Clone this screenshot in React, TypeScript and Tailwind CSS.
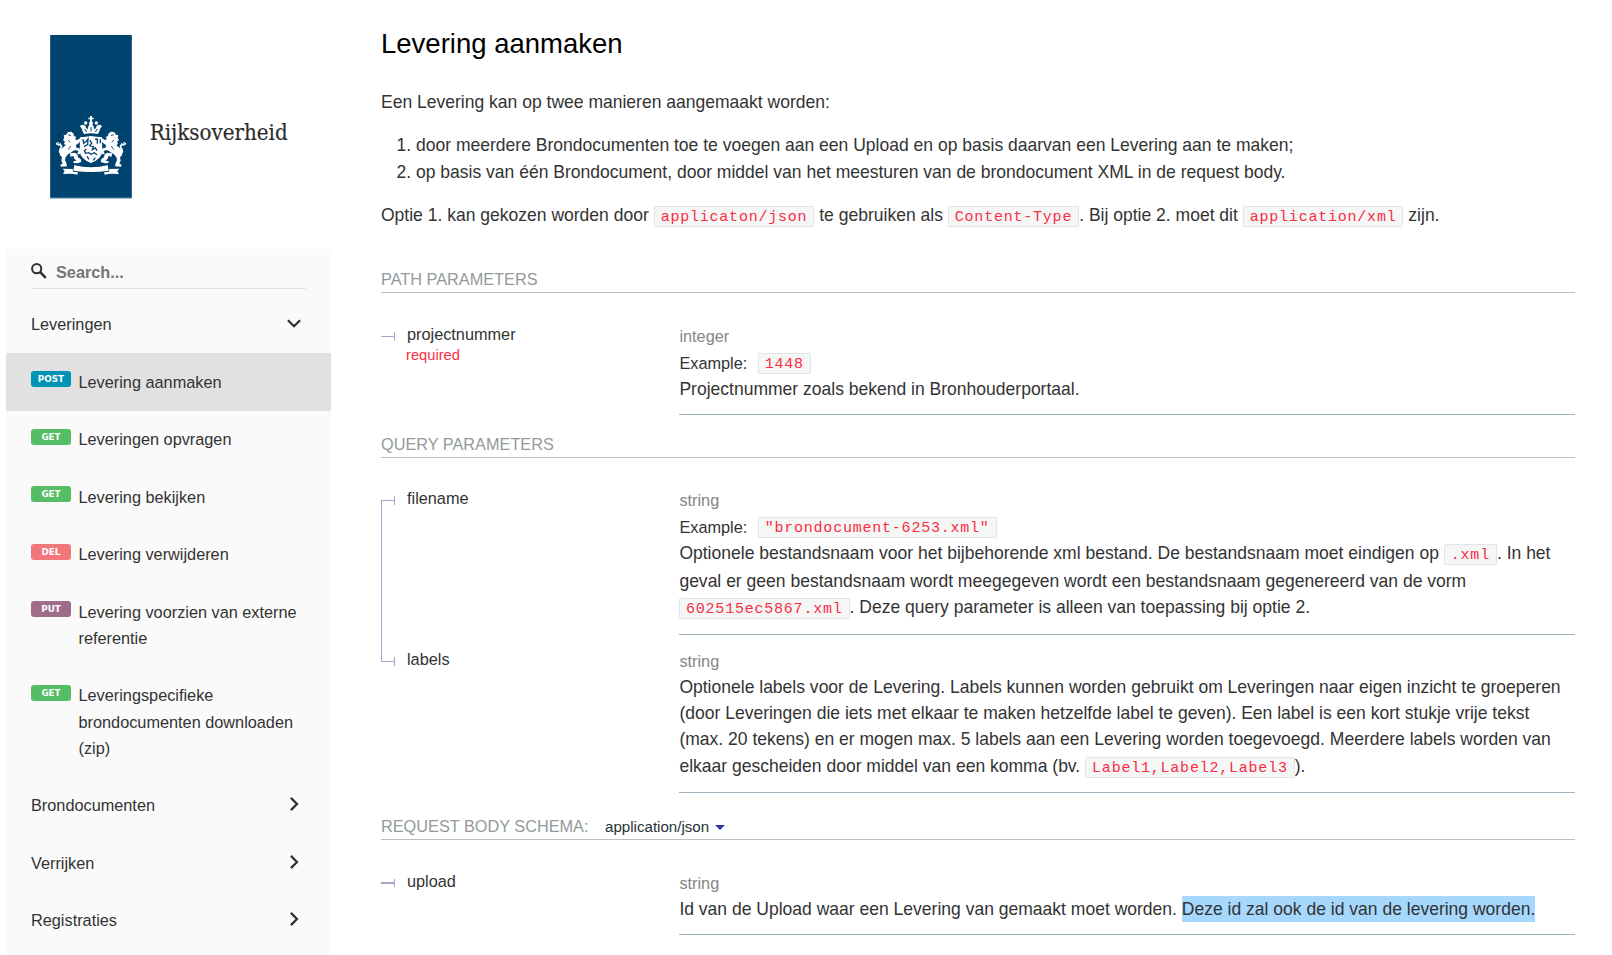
import type { ReactNode } from 'react';

const Code = ({ children }: { children: ReactNode }) => (
  <code
    className="rounded-[2px] border border-[#e2e5e6] bg-[#f5f6f6] px-[6px] pt-[2px] text-[15px] tracking-[0.78px] text-[#fb2c42]"
    style={{ fontFamily: '"Liberation Mono", monospace' }}
  >
    {children}
  </code>
);

const Line = ({ children, className = 'h-[26px]' }: { children: ReactNode; className?: string }) => (
  <div className={`whitespace-nowrap text-[17.53px] leading-[26px] ${className}`}>{children}</div>
);

const Heading = ({ children, className }: { children: ReactNode; className: string }) => (
  <h5
    className={`flex h-[27px] items-baseline border-b border-[#bbbfc1] text-[16.3px] leading-[26px] text-[#929a9d] ${className}`}
  >
    {children}
  </h5>
);

type ParamProps = {
  name: string;
  type: string;
  nameTop: string;
  padding: string;
  required?: boolean;
  connector: ReactNode;
  children: ReactNode;
};

const Param = ({ name, type, nameTop, padding, required, connector, children }: ParamProps) => (
  <div className="flex">
    <div className={`relative w-[298px] shrink-0 pl-[26px] ${nameTop}`}>
      {connector}
      <div className="text-[16.3px] leading-[26px]">{name}</div>
      {required && (
        <div className="-ml-px -mt-[3px] text-[14.7px] leading-[22px] text-[#fb2c42]">required</div>
      )}
    </div>
    <div className={`flex-1 border-b border-[#9fb4be] ${padding}`}>
      <div className="pl-[0.4px] text-[16.3px] leading-[26px] text-[#858585]">{type}</div>
      {children}
    </div>
  </div>
);

const Example = ({ value }: { value: string }) => (
  <div className="mt-px flex h-[26px] items-start gap-[10.4px] whitespace-nowrap pl-[0.4px] text-[16.3px] leading-[26px]">
    <span>Example:</span>
    <span className="-mt-px">
      <Code>{value}</Code>
    </span>
  </div>
);

const badgeColors = {
  POST: 'bg-[#0093b5]',
  GET: 'bg-[#55bd63]',
  DEL: 'bg-[#f2777a]',
  PUT: 'bg-[#a06c8c]',
};

const operations: { method: keyof typeof badgeColors; lines: string[]; active?: boolean }[] = [
  { method: 'POST', lines: ['Levering aanmaken'], active: true },
  { method: 'GET', lines: ['Leveringen opvragen'] },
  { method: 'GET', lines: ['Levering bekijken'] },
  { method: 'DEL', lines: ['Levering verwijderen'] },
  { method: 'PUT', lines: ['Levering voorzien van externe', 'referentie'] },
  { method: 'GET', lines: ['Leveringspecifieke', 'brondocumenten downloaden', '(zip)'] },
];

const Chevron = ({ down = false }: { down?: boolean }) => (
  <svg className="mr-[5px]" width="14" height="14" viewBox="0 0 14 14" fill="none" stroke="#2f2f2f" strokeWidth="2.2">
    <path d={down ? 'M0.9 3.2 L7 9.3 L13.1 3.2' : 'M3.9 0.9 L10 7 L3.9 13.1'} />
  </svg>
);

const Group = ({ label }: { label: string }) => (
  <div className="flex h-[57.5px] items-center justify-between px-[25px]">
    <span className="leading-[26px]">{label}</span>
    <div className="-mt-[2px]">
      <Chevron />
    </div>
  </div>
);

const Lion = () => (
  <g>
    <path d="M204 396 L214 395 L221 401 L222 408 L229 411 L225 418 L232 420 L240 415 L243 421 L236 430 L228 435 L229 443 L238 445 L243 455 L239 463 L232 462 L235 453 L226 450 L219 453 L212 458 L204 463 L197 472 L195 480 L199 490 L201 499 L183 500 L181 494 L188 491 L184 482 L186 472 L180 466 L179 455 L184 446 L191 440 L197 436 L192 431 L195 425 L189 420 L193 414 L191 406 L198 404 Z" />
    <path d="M210 460 L224 458 L232 463 L234 472 L242 477 L244 486 L232 490 L221 489 L220 484 L229 482 L222 475 L221 468 L211 470 Z" />
    <path d="M182 460 C172 450 188 444 184 437 C181 432 175 436 168 430" fill="none" stroke="white" strokeWidth="5" />
    <path d="M168 430 L177 428 M175 437 L182 429" stroke="white" strokeWidth="3" />
    <path d="M204 404 L213 407 M204 420 L211 427 M212 438 L205 449" stroke="#03416d" strokeWidth="2.5" />
  </g>
);

const Logo = () => (
  <svg width="290" height="164" viewBox="150 105 870 492" className="ml-[50px] mt-[35px] shrink-0">
    <rect x="150" y="105" width="246" height="491" fill="#7ca3c1" />
    <rect x="151" y="105" width="244" height="488" fill="#00436f" />
    <g fill="white">
      <path d="M270 348 h6 v5 h5 v5 h-5 v7 h-6 v-7 h-5 v-5 h5 Z" />
      <circle cx="273" cy="370" r="6" />
      <path d="M252 402 C247 390 242 384 246 377 C250 372 257 376 257 381 L262 389 C265 384 264 377 268 375 L278 375 C282 378 281 384 284 389 L289 381 C289 376 296 372 300 377 C304 384 299 390 294 402 Q273 397 252 402 Z" />
      <circle cx="257" cy="369" r="5" />
      <circle cx="289" cy="369" r="5" />
      <circle cx="246" cy="379" r="5" />
      <circle cx="300" cy="379" r="5" />
      <path d="M240 412 Q258 411 273 408 Q288 411 306 412 L307 455 Q304 477 273 489 Q242 477 239 455 Z" />
      <Lion />
      <g transform="translate(546 0) scale(-1 1)">
        <Lion />
      </g>
      <path d="M223 495 Q273 509 323 495 L326 512 Q273 520 220 512 Z" />
      <path d="M188 506 L218 507 L219 515 L234 517 L232 524 Q216 519 189 522 L194 514 Z" />
      <path d="M358 506 L328 507 L327 515 L312 517 L314 524 Q330 519 357 522 L352 514 Z" />
    </g>
    <g fill="none" stroke="#00436f">
      <path d="M254 387 L260 396 M273 381 V394 M292 387 L286 396" strokeWidth="3" />
      <path d="M249 417 L251 430 L259 424 L264 417 L263 434 L252 440 M270 420 L275 430 L269 437 L280 440 L277 449 L286 444 L291 452 M285 418 L292 417 L292 431 M301 418 V430 M259 447 L253 452 L257 460 L266 458 L273 463 L283 458 L291 464 M261 469 L267 478 M286 473 L280 481" strokeWidth="4" />
      <path d="M219 493 Q273 505 327 493" strokeWidth="2" />
    </g>
    <text
      x="449"
      y="421"
      fontSize="69"
      textLength="414"
      lengthAdjust="spacingAndGlyphs"
      fill="#2b2b2b"
      stroke="#2b2b2b"
      strokeWidth="0.5"
      style={{ fontFamily: '"DejaVu Serif Condensed", "DejaVu Serif", serif', fontStretch: 'condensed' }}
    >
      Rijksoverheid
    </text>
  </svg>
);

export default function App() {
  return (
    <div
      className="flex h-[955px] w-[1612px] overflow-hidden bg-white text-[#333333]"
      style={{ fontFamily: '"Liberation Sans", Arial, sans-serif' }}
    >
      <aside className="flex w-[331px] shrink-0 flex-col">
        <div className="flex h-[249px] shrink-0">
          <Logo />
        </div>
        <nav className="ml-[6px] flex-1 bg-[#fafafa] text-[16.3px]">
          <div className="mx-[25px] flex h-[40px] border-b border-[#e1e1e1]">
            <svg className="mt-[14px]" width="16" height="16" viewBox="0 0 16 16" fill="none" stroke="#2f2f2f">
              <circle cx="5.7" cy="5.7" r="4.6" strokeWidth="2" />
              <path d="M9.2 9.2 L14.8 14.8" strokeWidth="2.6" />
            </svg>
            <span className="ml-[9px] mt-[10px] text-[16.3px] font-bold leading-[26px] text-[#757575]">Search...</span>
          </div>
          <div className="flex h-[64px] items-start justify-between px-[25px] pt-[22px]">
            <span className="leading-[26px]">Leveringen</span>
            <div className="mt-[6px]">
              <Chevron down />
            </div>
          </div>
          {operations.map((op) => (
            <div
              key={op.lines[0]}
              className={`flex items-start px-[25px] pt-[15.7px] pb-[15.62px] ${op.active ? 'bg-[#e1e1e1]' : ''}`}
            >
              <span
                className={`mt-[2.5px] flex h-[16px] w-[40px] shrink-0 items-center justify-center rounded-[3px] text-[8.8px] font-bold leading-[16px] text-white ${badgeColors[op.method]}`}
                style={{ fontFamily: '"DejaVu Sans", Verdana, sans-serif' }}
              >
                {op.method}
              </span>
              <span className="ml-[7.5px] whitespace-nowrap leading-[26.2px]">
                {op.lines.map((line) => (
                  <span key={line} className="block">
                    {line}
                  </span>
                ))}
              </span>
            </div>
          ))}
          <Group label="Brondocumenten" />
          <Group label="Verrijken" />
          <Group label="Registraties" />
        </nav>
      </aside>

      <main className="ml-[50px] flex w-[1194px] shrink-0 flex-col">
        <h2 className="mt-[26px] h-[36px] whitespace-nowrap text-[27.5px] leading-[36px] text-black">
          Levering aanmaken
        </h2>
        <Line className="mt-[27px] h-[26px]">Een Levering kan op twee manieren aangemaakt worden:</Line>
        <ol className="mt-[17px] pl-[15.4px]">
          <li>
            <Line className="h-[27px]">
              <span className="inline-block w-[19.6px]">1.</span>
              door meerdere Brondocumenten toe te voegen aan een Upload en op basis daarvan een Levering aan te maken;
            </Line>
          </li>
          <li>
            <Line>
              <span className="inline-block w-[19.6px]">2.</span>
              op basis van één Brondocument, door middel van het meesturen van de brondocument XML in de request body.
            </Line>
          </li>
        </ol>
        <Line className="mt-[17px] h-[26px]">
          Optie 1. kan gekozen worden door <Code>applicaton/json</Code> te gebruiken als <Code>Content-Type</Code>. Bij
          optie 2. moet dit <Code>application/xml</Code> zijn.
        </Line>

        <Heading className="mt-[38px]">PATH PARAMETERS</Heading>
        <Param
          name="projectnummer"
          type="integer"
          nameTop="pt-[28px]"
          padding="pt-[30px] pb-[12px]"
          required
          connector={
            <>
              <i className="absolute left-0 top-[43px] h-px w-[14px] bg-[#a3a5cd]" />
              <i className="absolute left-[13px] top-[39px] h-[9px] w-px bg-[#a3a5cd]" />
            </>
          }
        >
          <Example value="1448" />
          <Line className="h-[26px] pl-[0.4px]">Projectnummer zoals bekend in Bronhouderportaal.</Line>
        </Param>

        <Heading className="mt-[16px]">QUERY PARAMETERS</Heading>
        <Param
          name="filename"
          type="string"
          nameTop="pt-[27px]"
          padding="pt-[29px] pb-[14px]"
          connector={
            <>
              <i className="absolute bottom-0 left-0 top-[42px] w-[14px] border-l border-t border-[#a3a5cd]" />
              <i className="absolute left-[13px] top-[38px] h-[9px] w-px bg-[#a3a5cd]" />
            </>
          }
        >
          <Example value={'"brondocument-6253.xml"'} />
          <Line className="h-[28px] pl-[0.4px]">
            Optionele bestandsnaam voor het bijbehorende xml bestand. De bestandsnaam moet eindigen op <Code>.xml</Code>.
            In het
          </Line>
          <Line className="h-[26px] pl-[0.4px]">
            geval er geen bestandsnaam wordt meegegeven wordt een bestandsnaam gegenereerd van de vorm
          </Line>
          <Line>
            <Code>602515ec5867.xml</Code>. Deze query parameter is alleen van toepassing bij optie 2.
          </Line>
        </Param>
        <Param
          name="labels"
          type="string"
          nameTop="pt-[11px]"
          padding="pt-[13px] pb-[13px]"
          connector={
            <>
              <i className="absolute left-0 top-0 h-[27px] w-[14px] border-b border-l border-[#a3a5cd]" />
              <i className="absolute left-[13px] top-[22px] h-[9px] w-px bg-[#a3a5cd]" />
            </>
          }
        >
          <Line className="h-[26px] pl-[0.4px]">
            Optionele labels voor de Levering. Labels kunnen worden gebruikt om Leveringen naar eigen inzicht te groeperen
          </Line>
          <Line className="h-[26px] pl-[0.4px]">
            (door Leveringen die iets met elkaar te maken hetzelfde label te geven). Een label is een kort stukje vrije tekst
          </Line>
          <Line className="h-[27px] pl-[0.4px]">
            (max. 20 tekens) en er mogen max. 5 labels aan een Levering worden toegevoegd. Meerdere labels worden van
          </Line>
          <Line className="h-[26px] pl-[0.4px]">
            elkaar gescheiden door middel van een komma (bv. <Code>Label1,Label2,Label3</Code>).
          </Line>
        </Param>

        <Heading className="mt-[20px]">
          <span>REQUEST BODY SCHEMA:</span>
          <span className="ml-[16.6px] text-[15.1px] text-[#263238]">application/json</span>
          <svg className="ml-[6px] mt-[12px] self-start" width="10" height="5" viewBox="0 0 10 5">
            <path d="M0 0H10L5 5Z" fill="#2a35a8" />
          </svg>
        </Heading>
        <Param
          name="upload"
          type="string"
          nameTop="pt-[28px]"
          padding="pt-[30px] pb-[12px]"
          connector={
            <>
              <i className="absolute left-0 top-[42px] h-[2px] w-[14px] bg-[#a3a5cd]" />
              <i className="absolute left-[13px] top-[39px] h-[8px] w-px bg-[#a3a5cd]" />
            </>
          }
        >
          <Line className="h-[26px] pl-[0.4px]">
            Id van de Upload waar een Levering van gemaakt moet worden.{' '}
            <mark className="inline-block h-[26px] bg-[#a5d8fc] text-[#333333]">
              Deze id zal ook de id van de levering worden.
            </mark>
          </Line>
        </Param>
      </main>
    </div>
  );
}
